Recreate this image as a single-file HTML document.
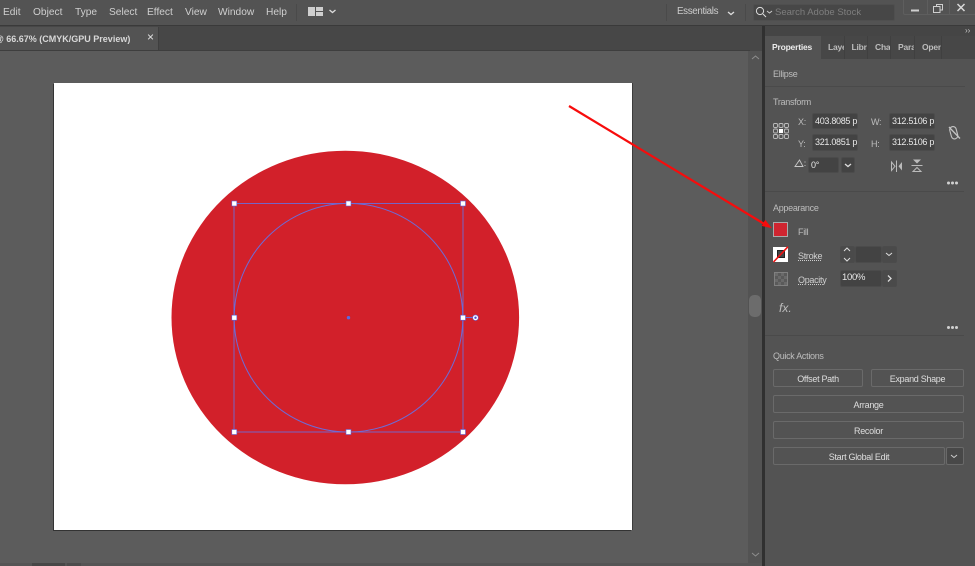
<!DOCTYPE html>
<html><head><meta charset="utf-8"><style>
html,body{margin:0;padding:0;background:#5c5c5c}
#r{position:relative;width:975px;height:566px;overflow:hidden;background:#5c5c5c;font-family:"Liberation Sans",sans-serif;color:#d8d8d8;font-size:10.5px}
#r div{position:absolute;box-sizing:border-box}
.t{white-space:nowrap;line-height:14px}
.m{top:6px;font-size:10.200px;color:#cfcfcf}
.i{background:#434343;border:1px solid #4b4b4b;color:#e8e8e8;font-size:9px;letter-spacing:-.3px;line-height:14px;padding-left:2px;overflow:hidden;white-space:nowrap;border-radius:2px}
.b{border:1px solid #6a6a6a;border-radius:2px;height:18px;text-align:center;color:#dedede;font-size:9px;letter-spacing:-.3px;line-height:18px;background:#535353}
.tab{top:36px;height:23px;font-size:8.500px;letter-spacing:-.2px;line-height:22px;color:#bcbcbc;overflow:hidden;white-space:nowrap;font-weight:bold;border-right:1px solid #404040;background:#474747}
.l{font-size:9px;letter-spacing:-.3px;color:#bdbdbd}
</style></head><body><div id="r">
<div style="left:0;top:0;width:975px;height:26px;background:#535353;border-bottom:1px solid #3a3a3a"></div>
<div class="t m" style="left:3px">Edit</div>
<div class="t m" style="left:33px">Object</div>
<div class="t m" style="left:75px">Type</div>
<div class="t m" style="left:109px">Select</div>
<div class="t m" style="left:147px">Effect</div>
<div class="t m" style="left:185px">View</div>
<div class="t m" style="left:218px">Window</div>
<div class="t m" style="left:266px">Help</div>
<div style="left:296px;top:4px;width:1px;height:17px;background:#4a4a4a"></div>
<svg style="position:absolute;left:0;top:0" width="975" height="566" fill="none">
<path d="M308 7h7v9h-7zM316 7h7v4h-7zM316 12h7v4h-7z" fill="#cfcfcf"/>
<path d="M329.500 10l3 2.500 3-2.500" stroke="#ddd" stroke-width="1.300"/>
<path d="M728 12l3 2.500 3-2.500" stroke="#ddd" stroke-width="1.300"/>
</svg>
<div style="left:666px;top:4px;width:1px;height:17px;background:#4a4a4a"></div>
<div class="t" style="left:677px;top:5px;font-size:9.800px;letter-spacing:-.35px;color:#cccccc">Essentials</div>
<div style="left:745px;top:4px;width:1px;height:17px;background:#4a4a4a"></div>
<div style="left:753px;top:4px;width:142px;height:17px;background:#474747;border:1px solid #4f4f4f;border-radius:2px"></div>
<div class="t" style="left:775px;top:6px;font-size:9.500px;color:#7e7e7e">Search Adobe Stock</div>
<div style="left:903px;top:-2px;width:73px;height:17px;border:1px solid #5e5e5e;border-radius:2px"></div>
<div style="left:927px;top:0;width:1px;height:15px;background:#5e5e5e"></div>
<div style="left:949px;top:0;width:1px;height:15px;background:#5e5e5e"></div>
<div style="left:0;top:26px;width:764px;height:25px;background:#474747"></div>
<div style="left:0;top:27px;width:159px;height:23px;background:#535353;border-right:1px solid #3f3f3f"></div>
<div class="t" style="left:-5px;top:32px;font-size:9px;font-weight:bold;color:#d8d8d8">@ 66.67% (CMYK/GPU Preview)</div>
<div class="t" style="left:147px;top:30px;font-size:12px;color:#e2e2e2">×</div>
<div style="left:0;top:50px;width:750px;height:1px;background:#3e3e3e"></div>
<div style="left:748px;top:51px;width:14px;height:515px;background:#535353"></div>
<div style="left:749px;top:295px;width:12px;height:22px;background:#6c6c6c;border-radius:5px"></div>
<div style="left:762px;top:26px;width:3px;height:540px;background:#303030"></div>
<div style="left:765px;top:26px;width:210px;height:540px;background:#535353"></div>
<div style="left:765px;top:26px;width:210px;height:10px;background:#454545"></div>
<div style="left:765px;top:36px;width:210px;height:23px;background:#474747"></div>
<div style="left:765px;top:36px;width:56px;height:23px;background:#535353"></div>
<div class="t" style="left:772px;top:40px;font-size:8.500px;letter-spacing:-.2px;font-weight:bold;color:#ececec">Properties</div>
<div class="tab" style="left:821px;width:24px;padding-left:7px">Layers</div>
<div class="tab" style="left:845px;width:23px;padding-left:6.500px">Libraries</div>
<div class="tab" style="left:868px;width:23px;padding-left:7px">Character</div>
<div class="tab" style="left:891px;width:24px;padding-left:7px">Paragraph</div>
<div class="tab" style="left:915px;width:27px;padding-left:7px">OpenType</div>
<div class="t" style="left:965px;top:24px;font-size:8px;color:#c8c8c8">››</div>
<div class="t l" style="left:773px;top:67px">Ellipse</div>
<div style="left:765px;top:86px;width:200px;height:1px;background:#4a4a4a"></div>
<div class="t l" style="left:773px;top:95px">Transform</div>
<div class="t l" style="left:798px;top:115px">X:</div>
<div class="t l" style="left:798px;top:137px">Y:</div>
<div class="t l" style="left:871px;top:115px">W:</div>
<div class="t l" style="left:871px;top:137px">H:</div>
<div class="i" style="left:812px;top:113px;width:46px;height:16px">403.8085 p</div>
<div class="i" style="left:812px;top:134px;width:46px;height:17px;line-height:15px">321.0851 p</div>
<div class="i" style="left:889px;top:113px;width:46px;height:16px">312.5106 p</div>
<div class="i" style="left:889px;top:134px;width:46px;height:17px;line-height:15px">312.5106 p</div>
<div class="i" style="left:808px;top:157px;width:31px;height:16px">0°</div>
<div class="i" style="left:841px;top:157px;width:14px;height:16px"></div>
<div style="left:765px;top:191px;width:199px;height:1px;background:#4a4a4a"></div>
<div class="t l" style="left:773px;top:201px">Appearance</div>
<div style="left:773px;top:222px;width:15px;height:15px;background:#cf2530;border:1px solid #aaa"></div>
<div class="t l" style="left:798px;top:225px">Fill</div>
<div style="left:773px;top:247px;width:15px;height:15px;background:#fff"></div>
<div style="left:777px;top:250px;width:8px;height:8px;background:#444;border:1px solid #222"></div>
<div class="t l" style="left:798px;top:249px;color:#cfcfcf;text-decoration:underline dotted">Stroke</div>
<div class="i" style="left:840px;top:246px;width:15px;height:17px;background:#4a4a4a"></div>
<div class="i" style="left:855px;top:246px;width:27px;height:17px"></div>
<div class="i" style="left:882px;top:246px;width:15px;height:17px;background:#4a4a4a"></div>
<div style="left:774px;top:272px;width:14px;height:14px;background:repeating-conic-gradient(#5a5a5a 0 25%,#6a6a6a 0 50%) 0 0/6px 6px;border:1px solid #808080"></div>
<div class="t l" style="left:798px;top:273px;color:#cfcfcf;text-decoration:underline dotted">Opacity</div>
<div class="i" style="left:840px;top:270px;width:42px;height:17px;line-height:14px;padding-left:1px;font-size:9.500px">100%</div>
<div class="i" style="left:882px;top:270px;width:15px;height:17px;background:#4a4a4a"></div>
<div class="t" style="left:779px;top:301px;font-style:italic;font-size:12px;color:#bdbdbd">fx.</div>
<div style="left:765px;top:335px;width:199px;height:1px;background:#4a4a4a"></div>
<div class="t l" style="left:773px;top:349px">Quick Actions</div>
<div class="b" style="left:773px;top:369px;width:90px">Offset Path</div>
<div class="b" style="left:871px;top:369px;width:93px">Expand Shape</div>
<div class="b" style="left:773px;top:395px;width:191px">Arrange</div>
<div class="b" style="left:773px;top:421px;width:191px">Recolor</div>
<div class="b" style="left:773px;top:447px;width:172px">Start Global Edit</div>
<div class="b" style="left:946px;top:447px;width:18px;background:#484848"></div>
<div style="left:54px;top:83px;width:578px;height:447px;background:#fff;box-shadow:-1px 1px 0 #333,1px 0 0 #3c3c3c"></div>
<div style="left:0;top:563px;width:762px;height:3px;background:#555"></div>
<div style="left:32px;top:563px;width:33px;height:3px;background:#474747"></div>
<div style="left:67px;top:563px;width:14px;height:3px;background:#4c4c4c"></div>
<svg style="position:absolute;left:0;top:0" width="975" height="566" fill="none">
<circle cx="760" cy="11" r="3.600" stroke="#ddd"/><path d="M763 14l3 3" stroke="#ddd"/><path d="M767 11l2.500 2 2.500-2" stroke="#ccc"/>
<path d="M911 10.500h8" stroke="#cfcfcf" stroke-width="2"/>
<path d="M936.500 6V4.500h6V10H940M933.500 6.500h6.500V12.500h-6.500z" stroke="#cfcfcf"/>
<path d="M957.500 4l7 7M964.500 4l-7 7" stroke="#d8d8d8" stroke-width="1.500"/>
<ellipse cx="345.300" cy="317.500" rx="173.800" ry="166.800" fill="#d2202a"/>
<path d="M569 106L766 225" stroke="#f70c0c" stroke-width="2.200"/><path d="M772 228.300L761.600 225.900 765.200 219.900z" fill="#f70c0c"/>
<rect x="234" y="203.500" width="229" height="228.500" stroke="#6c6cd8" stroke-width=".9"/>
<circle cx="348.500" cy="317.700" r="114.300" stroke="#6c6cd8" stroke-width="1"/>
<path d="M463 317.500h12" stroke="#6c6cd8"/>
<g fill="#fff" stroke="#6060d4" stroke-width=".6"><rect x="231.800" y="201" width="5" height="5"/><rect x="346" y="201" width="5" height="5"/><rect x="460.500" y="201" width="5" height="5"/><rect x="231.800" y="315.200" width="5" height="5"/><rect x="460.500" y="315.200" width="5" height="5"/><rect x="231.800" y="429.500" width="5" height="5"/><rect x="346" y="429.500" width="5" height="5"/><rect x="460.500" y="429.500" width="5" height="5"/><circle cx="475.500" cy="317.700" r="2.800"/></g>
<circle cx="475.500" cy="317.700" r="1.200" fill="#4a4ad0"/><circle cx="348.500" cy="317.700" r="1.700" fill="#5a6ae0"/>
<path d="M752 59l3.500-3 3.500 3M752 553l3.500 3 3.500-3" stroke="#8e8e8e"/>
<g stroke="#bcbcbc" stroke-width=".9"><rect x="773.500" y="123.500" width="4" height="4" rx="1.200"/><rect x="779" y="123.500" width="4" height="4" rx="1.200"/><rect x="784.500" y="123.500" width="4" height="4" rx="1.200"/><rect x="773.500" y="129" width="4" height="4" rx="1.200"/><rect x="784.500" y="129" width="4" height="4" rx="1.200"/><rect x="773.500" y="134.500" width="4" height="4" rx="1.200"/><rect x="779" y="134.500" width="4" height="4" rx="1.200"/><rect x="784.500" y="134.500" width="4" height="4" rx="1.200"/></g>
<rect x="779" y="129" width="4" height="4" fill="#fff"/>
<rect x="950.500" y="126.500" width="6.500" height="12.500" rx="3.200" transform="rotate(-15 953.700 132.700)" stroke="#c4c4c4" stroke-width="1.100"/>
<path d="M949 127l11 11.500" stroke="#c4c4c4" stroke-width="1.300"/>
<path d="M795 166.500l4.500-6.500 3.500 6.500zM805 161.500v1M805 165v1" stroke="#c8c8c8" stroke-width=".9"/>
<path d="M845 164l3 2.500 3-2.500" stroke="#ddd" stroke-width="1.300"/>
<path d="M896.500 160.500v11.500" stroke="#bbb"/><path d="M891.500 162v8.500l3.500-4.200z" stroke="#bbb"/><path d="M902 162v8.500l-3.500-4.200z" fill="#bbb"/>
<path d="M911.500 165.500h11" stroke="#bbb"/><path d="M913 159.500h8l-4 4z" fill="#bbb"/><path d="M913 171.500h8l-4-4z" stroke="#bbb"/>
<g fill="#d0d0d0"><circle cx="948.500" cy="183" r="1.500"/><circle cx="952.500" cy="183" r="1.500"/><circle cx="956.500" cy="183" r="1.500"/><circle cx="948.500" cy="327.500" r="1.500"/><circle cx="952.500" cy="327.500" r="1.500"/><circle cx="956.500" cy="327.500" r="1.500"/></g>
<path d="M773.500 262l14.500-15.300" stroke="#f01010" stroke-width="1.600"/>
<path d="M844 251l3-3 3 3M844 258l3 3 3-3M886 253l3 2.500 3-2.500" stroke="#ddd" stroke-width="1"/>
<path d="M888 275.500l3 3-3 3" stroke="#ddd" stroke-width="1.300"/>
<path d="M951 455l3 2.500 3-2.500" stroke="#ccc"/>
</svg>
</div></body></html>
